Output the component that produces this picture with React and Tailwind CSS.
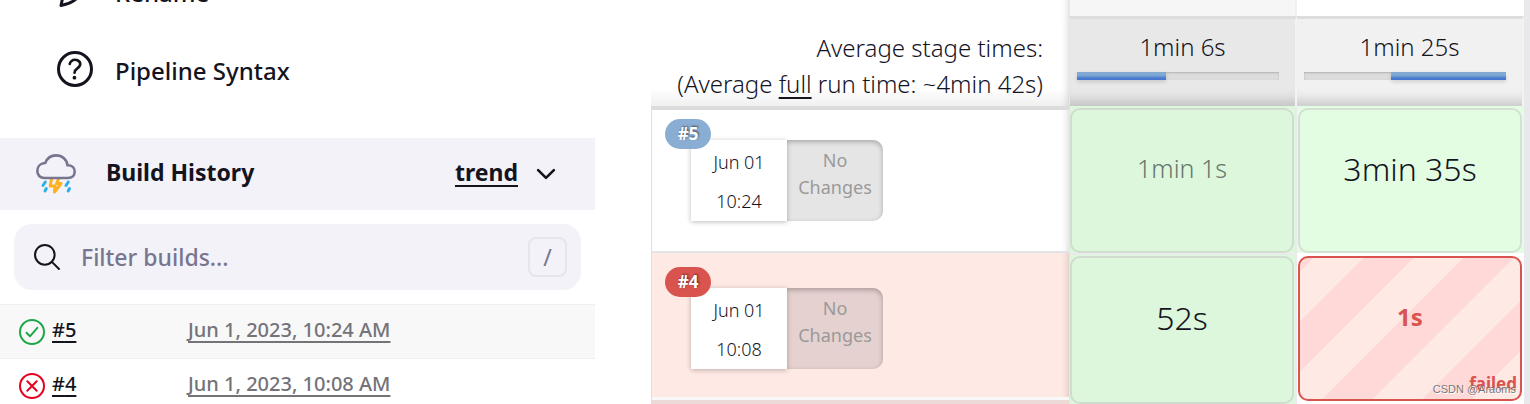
import React, { useState } from 'react';
import { IoChevronDown, IoHelpCircleOutline, IoSearchOutline } from 'react-icons/io5';

const builds = [
    { id: 5, date: 'Jun 1, 2023, 10:24 AM', ok: true },
    { id: 4, date: 'Jun 1, 2023, 10:08 AM', ok: false },
];

const PencilIcon = () => (
    <svg viewBox="0 0 48 48" className="size-12" fill="none" stroke="currentColor" strokeWidth="3" strokeLinejoin="round">
        <path d="M12.5 27 L35 6 L42 12 L26 31 Q21 36.5 10 38.5 Z" />
    </svg>
);

const StormIcon = () => (
    <svg viewBox="0 0 40 40" className="size-10" fill="none" strokeLinecap="round" strokeLinejoin="round">
        <path d="M15.5 25 L14.2 32 H19 L18.5 38 L25 29.5 H20.5 L22.5 25" stroke="#ffb01f" strokeWidth="3" />
        <path d="M9.3 28 L7 31.5 M10.3 34.5 L9 37 M32.3 28 L30 31.5 M33.5 34.5 L32.2 37" stroke="#2fb0ea" strokeWidth="3" />
        <path
            d="M8.5 24 C4 24 1.3 21 1.3 16.8 C1.3 12.6 4.5 9.3 9.3 9 C11 4.5 15 1.4 20 1.4 C26.2 1.4 31 5.5 31.5 11.3 C36 11.3 38.7 13.8 38.7 17.5 C38.7 21.4 36 24 32 24 Z"
            fill="#f3f2f8"
            stroke="#78758f"
            strokeWidth="2.6"
        />
    </svg>
);

const StatusIcon = ({ ok }) => (
    <svg viewBox="0 0 26 26" className={`size-[26px] ${ok ? 'text-[#1ea64b]' : 'text-[#e6001f]'}`} fill="none" stroke="currentColor" strokeWidth="2" strokeLinecap="round" strokeLinejoin="round">
        <circle cx="13" cy="13" r="12" />
        {ok ? <path d="M7.5 13.8 L11 17.3 L18.3 8.8" /> : <path d="M8.3 8.3 L17.7 17.7 M17.7 8.3 L8.3 17.7" />}
    </svg>
);

const Sidebar = () => {
    const [filter, setFilter] = useState('');

    return (
        <aside className="w-[595px] shrink-0 font-medium">
            <nav className="-mt-12 mb-[30px] text-[24px]">
                <a href="#rename" className="flex h-[78px] items-center gap-4 pl-[51px]">
                    <PencilIcon />
                    <span className="pt-1">Rename</span>
                </a>
                <a href="#syntax" className="flex h-[78px] items-center gap-4 pl-[51px]">
                    <IoHelpCircleOutline className="size-12" />
                    <span className="pt-1">Pipeline Syntax</span>
                </a>
            </nav>

            <div className="flex h-[72px] items-center bg-[#f3f2f8] pr-[35px] pl-9 text-[23px] font-bold">
                <StormIcon />
                <h2 className="ml-[30px] flex-1 pb-1">Build History</h2>
                <a href="#trend" className="pb-1 underline decoration-2 underline-offset-4">trend</a>
                <button type="button" aria-label="Collapse" className="ml-[14px]">
                    <IoChevronDown className="size-7" />
                </button>
            </div>

            <label className="m-[14px] flex h-[66px] items-center rounded-[18px] bg-[#f3f2f8] pr-[14px] pl-[17px]">
                <IoSearchOutline className="size-8" />
                <input
                    type="text"
                    aria-label="Filter builds"
                    placeholder="Filter builds..."
                    value={filter}
                    onChange={(e) => setFilter(e.target.value)}
                    className="ml-[18px] min-w-0 flex-1 bg-transparent text-[23px] outline-none placeholder:text-[#78758f]"
                />
                <kbd className="flex h-10 w-[39px] items-center justify-center rounded-lg border-2 border-[#e5e4ef] font-['Noto_Sans',sans-serif] text-[23px] font-normal text-[#78758f]">/</kbd>
            </label>

            <table className="w-full text-[20px]">
                <tbody>
                    {builds.filter((b) => `#${b.id} ${b.date}`.includes(filter)).map((b) => (
                        <tr key={b.id} className="h-[54px] border-t border-[#f0f0f4] odd:bg-[#f8f8f8]">
                            <td className="w-[188px] pl-[19px]">
                                <span className="flex items-center gap-[7px]">
                                    <StatusIcon ok={b.ok} />
                                    <a href={`#${b.id}`} className="pb-1 underline decoration-2 underline-offset-4">#{b.id}</a>
                                </span>
                            </td>
                            <td className="pb-1">
                                <a href={`#${b.id}`} className="text-[#737378] underline decoration-2 underline-offset-4">{b.date}</a>
                            </td>
                        </tr>
                    ))}
                </tbody>
            </table>
        </aside>
    );
};

const RunInfo = ({ id, time, failed }) => (
    <div className="relative flex pl-[39px] text-center text-[18px]">
        <span className={`absolute -top-[21px] left-[13px] z-10 flex h-[30px] w-[46px] items-center justify-center rounded-full text-[17px] font-bold text-white [text-shadow:1px_-1px_2px_#0008] ${failed ? 'bg-[#d9534f]' : 'bg-[#8aaed3]'}`}>
            #{id}
        </span>
        <div className="h-[81px] w-24 bg-white pt-[3px] leading-[39px] shadow-[0_1px_5px_#0004]">
            <div>Jun 01</div>
            <div>{time}</div>
        </div>
        <div className={`h-[81px] w-24 rounded-r-[10px] pt-[7px] leading-[27px] font-normal text-[#9a9a9a] shadow-[inset_0_2px_5px_#0004] ${failed ? 'bg-[#e5d1cf]' : 'bg-[#e5e5e5]'}`}>
            No<br />Changes
        </div>
    </div>
);

const StageHeader = ({ time, tone, bar }) => (
    <th className={`border-t-3 border-r-2 border-t-[#ddd] border-r-[#f3f3f3] p-0 align-top font-normal shadow-[inset_0_-16px_14px_-12px_#0003] ${tone}`}>
        <div className="pt-[10px] text-[24px] leading-9 font-light">{time}</div>
        <div className="mt-[7px] mr-4 ml-[7px] h-2 bg-[#dcdcdc] shadow-[inset_0_1px_2px_#0003]">
            <div className={`h-2 bg-linear-to-b from-[#80a9d3] from-40% to-[#4777cf] to-80% shadow-[0_2px_4px_#0002] ${bar}`} />
        </div>
    </th>
);

const StageView = () => (
    <main className="ml-14 flex-1 border-r-6 border-[#e9e9ed]">
        <table className="w-full table-fixed border-separate border-spacing-0">
            <colgroup>
                <col className="w-[48%]" />
                <col className="w-[26%]" />
                <col className="w-[26%]" />
            </colgroup>
            <thead>
                <tr className="h-4">
                    <td className="border-r border-[#e6e6e6] shadow-[inset_-8px_0_8px_-8px_#0003]" />
                    <td className="border-r-2 border-[#f0f0f0] bg-[#f6f6f6]" />
                    <td />
                </tr>
                <tr className="h-[90px]">
                    <th className="border-r border-[#e6e6e6] bg-linear-to-b from-white from-80% to-[#f0f0f0] p-0 pt-[14px] pr-[26px] text-right align-top text-[24px] leading-9 font-light shadow-[inset_-8px_0_8px_-8px_#0003]">
                        Average stage times:<br />
                        (Average <span className="underline decoration-2 underline-offset-4">full</span> run time: ~4min 42s)
                    </th>
                    <StageHeader time="1min 6s" tone="bg-[#e8e8e8]" bar="w-[44%]" />
                    <StageHeader time="1min 25s" tone="bg-[#f1f1f1]" bar="ml-auto w-[57%]" />
                </tr>
            </thead>
            <tbody>
                <tr className="h-[147px]">
                    <td className="border-t-4 border-r border-b-2 border-l border-t-[#dcdcdc] border-r-[#e6e6e6] border-b-[#e2e4e6] border-l-[#e0e0e0] p-0 pt-[30px] align-top font-light shadow-[inset_-8px_0_8px_-8px_#0003]">
                        <RunInfo id={5} time="10:24" />
                    </td>
                    <td className="border-r-2 border-[#ebebeb] bg-[#dcf7dc] p-0 pt-[2px] pr-px">
                        <div className="flex h-[145px] items-center justify-center rounded-[10px] border-2 border-[#d0dcd0] pb-6 text-[25px] font-light text-[#66756a]">1min 1s</div>
                    </td>
                    <td className="bg-[#e3fde3] p-0 pt-[2px] pr-[2px] pl-px">
                        <div className="flex h-[145px] items-center justify-center rounded-[10px] border-2 border-[#d5e0d5] pb-6 text-[32px] font-light">3min 35s</div>
                    </td>
                </tr>
                <tr className="h-[151px]">
                    <td className="border-r border-l border-r-[#e6e6e6] border-l-[#e0e0e0] bg-[#ebdad5] p-0 align-top font-light">
                        <div className="h-[147px] border-b-3 border-[#f8f8f8] bg-[#ffe9e4] pt-[35px] shadow-[inset_-8px_0_8px_-8px_#0003]">
                            <RunInfo id={4} time="10:08" failed />
                        </div>
                    </td>
                    <td className="border-t-2 border-r-2 border-[#ebebeb] bg-[#dcf7dc] p-0 pt-px pr-px align-top">
                        <div className="flex h-[148px] items-center justify-center rounded-[10px] border-2 border-[#d0dcd0] pb-6 text-[32px] font-light">52s</div>
                    </td>
                    <td className="p-0 pt-[3px] pr-[2px] pl-px align-top">
                        <div className="relative flex h-[145px] items-center justify-center rounded-[10px] border-2 border-[#d9534f] bg-[linear-gradient(135deg,#ffd8d8_7%,#ffe9e4_7%_32%,#ffd8d8_32%_57%,#ffe9e4_57%_82%,#ffd8d8_82%)] bg-[length:100px_100px] pb-6 text-[24px] font-bold text-[#d9534f]">
                            1s
                            <span className="absolute right-[3px] bottom-[3px] text-[17px] leading-6">failed</span>
                            <span className="absolute right-1 bottom-0 font-['Liberation_Sans',sans-serif] text-[11px] leading-5 font-normal whitespace-nowrap text-[#777] [text-shadow:1px_1px_0_#fff]">CSDN @Araoms</span>
                        </div>
                    </td>
                </tr>
            </tbody>
        </table>
    </main>
);

const App = () => (
    <div className="flex h-screen overflow-hidden bg-white font-['Noto_Sans','Open_Sans',sans-serif] text-[#14141f]">
        <Sidebar />
        <StageView />
    </div>
);

export default App;
